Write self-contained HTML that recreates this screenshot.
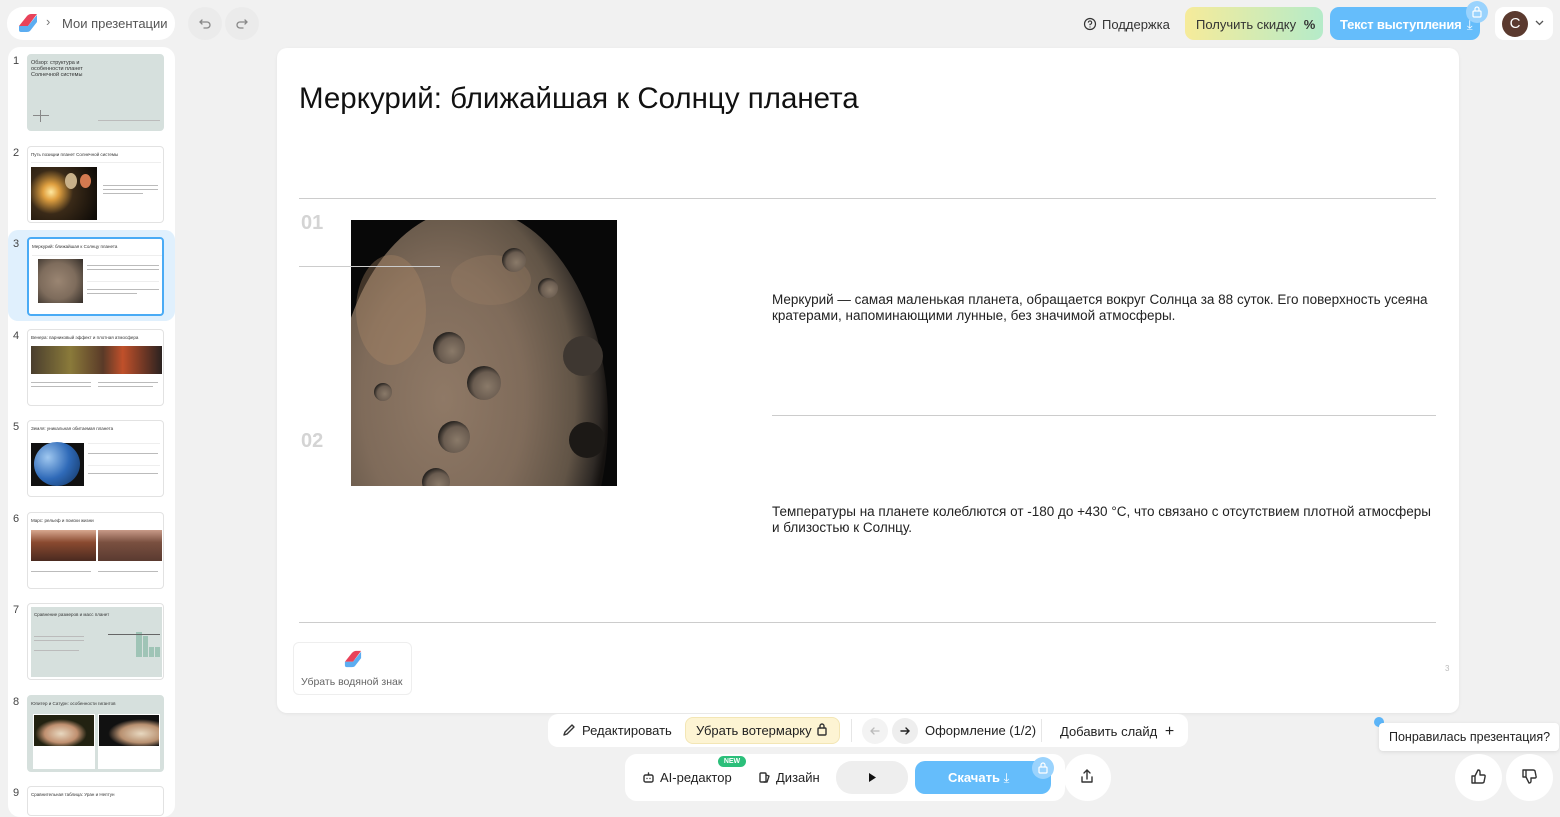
<!DOCTYPE html>
<html><head><meta charset="utf-8">
<style>
*{box-sizing:border-box;margin:0;padding:0}
body{width:1560px;height:808px;background:#f1f1f1;font-family:"Liberation Sans","DejaVu Sans",sans-serif;position:relative;overflow:hidden;color:#222}
.a{position:absolute}
.pill{background:#fff;border-radius:14px}
.th{position:absolute;left:27px;width:137px;height:77px;border:1px solid #e2e2e2;border-radius:4px;background:#fff;overflow:hidden}
.num{position:absolute;left:13px;font-size:11px;color:#444}
.tt{position:absolute;left:3px;top:5px;font-size:4.5px;color:#333;white-space:nowrap}
.ln{position:absolute;height:1px;background:#eee}
.tx{position:absolute;height:1.5px;background:#bbb}
.icn{stroke:#333;fill:none;stroke-width:1.4;stroke-linecap:round;stroke-linejoin:round}
</style></head><body>

<!-- top-left -->
<div class="a pill" style="left:7px;top:7px;width:168px;height:33px;border-radius:16px"></div>
<svg class="a" style="left:17px;top:13px" width="22" height="20" viewBox="0 0 22 20"><path d="M2 13 L10 3 Q12 1 14 1 L20 1 L11 13 Z" fill="#e8425a"/><path d="M2 13 L11 13 L20 2 L20 9 L13 18 Q12 19 10 19 L4 19 Q2 19 2 17 Z" fill="#4aa4ef" opacity=".9"/></svg>
<div class="a" style="left:46px;top:14px;font-size:13px;color:#777">›</div>
<div class="a" style="left:62px;top:16px;font-size:13px;color:#555">Мои презентации</div>
<div class="a" style="left:188px;top:7px;width:34px;height:33px;border-radius:50%;background:#ebebeb"></div>
<div class="a" style="left:225px;top:7px;width:34px;height:33px;border-radius:50%;background:#ebebeb"></div>
<svg class="a" style="left:197px;top:16px" width="16" height="16" viewBox="0 0 16 16"><path d="M5 4 L3 6 L5 8 M3 6 H10 A3 3 0 0 1 10 12 H7" fill="none" stroke="#888" stroke-width="1.3" stroke-linecap="round"/></svg>
<svg class="a" style="left:234px;top:16px" width="16" height="16" viewBox="0 0 16 16"><path d="M11 4 L13 6 L11 8 M13 6 H6 A3 3 0 0 0 6 12 H9" fill="none" stroke="#888" stroke-width="1.3" stroke-linecap="round"/></svg>

<!-- top-right -->
<svg class="a" style="left:1083px;top:17px" width="14" height="14" viewBox="0 0 14 14"><circle cx="7" cy="7" r="5.5" fill="none" stroke="#333" stroke-width="1.2"/><path d="M5.3 5.6 A1.7 1.7 0 1 1 7 7.3 V8.2" fill="none" stroke="#333" stroke-width="1.1"/><circle cx="7" cy="10" r=".6" fill="#333"/></svg>
<div class="a" style="left:1102px;top:17px;font-size:13px;color:#333">Поддержка</div>
<div class="a" style="left:1185px;top:7px;width:138px;height:33px;border-radius:9px;background:linear-gradient(90deg,#f6eb9a,#b5ebc9)"></div>
<div class="a" style="left:1196px;top:17px;font-size:13px;color:#333">Получить скидку <b style="margin-left:4px">%</b></div>
<div class="a" style="left:1330px;top:7px;width:150px;height:33px;border-radius:9px;background:#65bdfb"></div>
<div class="a" style="left:1340px;top:17px;font-size:13px;color:#fff;font-weight:bold;letter-spacing:-0.2px">Текст выступления <span style="font-weight:normal;margin-left:2px">⤓</span></div>
<div class="a" style="left:1466px;top:1px;width:22px;height:22px;border-radius:50%;background:#9ad3fd"></div>
<svg class="a" style="left:1471px;top:5px" width="12" height="13" viewBox="0 0 12 13"><rect x="2" y="6" width="8" height="6" rx="1" fill="none" stroke="#fff" stroke-width="1.2"/><path d="M4 6 V4 A2 2 0 0 1 8 4 V6" fill="none" stroke="#fff" stroke-width="1.2"/></svg>
<div class="a" style="left:1495px;top:7px;width:58px;height:33px;border-radius:9px;background:#fff"></div>
<div class="a" style="left:1502px;top:11px;width:26px;height:26px;border-radius:50%;background:#5b3a2f;color:#fff;font-size:15px;text-align:center;line-height:26px">C</div>
<svg class="a" style="left:1535px;top:20px" width="9" height="6" viewBox="0 0 9 6"><path d="M1 1 L4.5 4.5 L8 1" fill="none" stroke="#555" stroke-width="1.3"/></svg>

<!-- left panel -->
<div class="a" style="left:8px;top:47px;width:167px;height:770px;background:#fff;border-radius:12px"></div>
<div class="a" style="left:8px;top:230px;width:167px;height:91px;background:#e0f0fd;border-radius:10px"></div>

<div class="num" style="top:55px">1</div>
<div class="th" style="top:54px;background:#d6e0dd;border-color:#d6e0dd"><div class="tt" style="font-size:5.5px;line-height:6px;white-space:normal;width:70px">Обзор: структура и особенности планет Солнечной системы</div><div class="tx" style="left:70px;top:65px;width:62px;height:1px"></div><div class="a" style="left:5px;top:60px;width:16px;height:1px;background:#888"></div><div class="a" style="left:12px;top:55px;width:1px;height:12px;background:#888"></div></div>

<div class="num" style="top:147px">2</div>
<div class="th" style="top:146px"><div class="tt">Путь позиции планет Солнечной системы</div><div class="ln" style="left:3px;top:15px;width:130px"></div><div class="a" style="left:3px;top:20px;width:66px;height:53px;background:radial-gradient(circle at 20px 25px,#ffe9a0 0,#e0a040 8px,#3a2a18 22px,#100c08 50px)"></div><div class="a" style="left:37px;top:26px;width:12px;height:16px;border-radius:50%;background:#c9b18a"></div><div class="a" style="left:52px;top:27px;width:11px;height:14px;border-radius:50%;background:#d47a50"></div><div class="tx" style="left:75px;top:38px;width:55px;height:1px"></div><div class="tx" style="left:75px;top:42px;width:55px;height:1px"></div><div class="tx" style="left:75px;top:46px;width:40px;height:1px"></div></div>

<div class="num" style="top:238px">3</div>
<div class="th" style="top:237px;border:2px solid #4aabf5;height:79px"><div class="tt">Меркурий: ближайшая к Солнцу планета</div><div class="ln" style="left:3px;top:16px;width:130px"></div><div class="a" style="left:9px;top:20px;width:45px;height:44px;background:radial-gradient(circle at 20px 22px,#9a8572 0,#7e6c5c 18px,#3a332d 32px,#111 40px)"></div><div class="tx" style="left:58px;top:26px;width:72px;height:1px"></div><div class="tx" style="left:58px;top:30px;width:72px;height:1px"></div><div class="ln" style="left:58px;top:42px;width:72px"></div><div class="tx" style="left:58px;top:50px;width:72px;height:1px"></div><div class="tx" style="left:58px;top:54px;width:50px;height:1px"></div></div>

<div class="num" style="top:330px">4</div>
<div class="th" style="top:329px"><div class="tt">Венера: парниковый эффект и плотная атмосфера</div><div class="a" style="left:3px;top:16px;width:131px;height:28px;background:linear-gradient(90deg,#4a3e2e,#8a7a3a 30%,#5a3a28 55%,#c0502a 70%,#2a2220)"></div><div class="tx" style="left:3px;top:52px;width:60px;height:1px"></div><div class="tx" style="left:3px;top:56px;width:60px;height:1px"></div><div class="tx" style="left:70px;top:52px;width:60px;height:1px"></div><div class="tx" style="left:70px;top:56px;width:55px;height:1px"></div></div>

<div class="num" style="top:421px">5</div>
<div class="th" style="top:420px"><div class="tt">Земля: уникальная обитаемая планета</div><div class="a" style="left:3px;top:22px;width:53px;height:43px;background:#111"></div><div class="a" style="left:6px;top:21px;width:46px;height:44px;border-radius:50%;background:radial-gradient(circle at 30% 35%,#a0c8f0,#2f6ab8 50%,#10305a)"></div><div class="ln" style="left:60px;top:22px;width:72px"></div><div class="tx" style="left:60px;top:32px;width:70px;height:1px"></div><div class="ln" style="left:60px;top:44px;width:72px"></div><div class="tx" style="left:60px;top:52px;width:70px;height:1px"></div></div>

<div class="num" style="top:513px">6</div>
<div class="th" style="top:512px"><div class="tt">Марс: рельеф и поиски жизни</div><div class="a" style="left:3px;top:17px;width:65px;height:31px;background:linear-gradient(#d8a890,#8a4a30 40%,#4a2a20)"></div><div class="a" style="left:70px;top:17px;width:64px;height:31px;background:linear-gradient(#c89a88,#7a5040 40%,#5a3a30)"></div><div class="tx" style="left:3px;top:58px;width:60px;height:1px"></div><div class="tx" style="left:70px;top:58px;width:60px;height:1px"></div></div>

<div class="num" style="top:604px">7</div>
<div class="th" style="top:603px"><div class="a" style="left:3px;top:3px;width:131px;height:70px;background:#d6e0dd"></div><div class="tt" style="top:8px;left:6px">Сравнение размеров и масс планет</div><div class="tx" style="left:6px;top:32px;width:50px;height:1px"></div><div class="tx" style="left:6px;top:36px;width:50px;height:1px"></div><div class="tx" style="left:6px;top:46px;width:45px;height:1px"></div><div class="a" style="left:108px;top:28px;width:6px;height:25px;background:#9fc4b6"></div><div class="a" style="left:115px;top:32px;width:5px;height:21px;background:#9fc4b6"></div><div class="a" style="left:121px;top:43px;width:5px;height:10px;background:#9fc4b6"></div><div class="a" style="left:127px;top:43px;width:5px;height:10px;background:#9fc4b6"></div><div class="a" style="left:80px;top:30px;width:52px;height:1px;background:#666"></div></div>

<div class="num" style="top:696px">8</div>
<div class="th" style="top:695px;background:#d6e0dd;border-color:#d6e0dd"><div class="tt">Юпитер и Сатурн: особенности гигантов</div><div class="a" style="left:5px;top:18px;width:62px;height:55px;background:#fff"></div><div class="a" style="left:70px;top:18px;width:62px;height:55px;background:#fff"></div><div class="a" style="left:6px;top:19px;width:60px;height:31px;background:radial-gradient(ellipse at 45% 60%,#e8d8c0 0,#c09070 35%,#221 55%)"></div><div class="a" style="left:71px;top:19px;width:60px;height:31px;background:radial-gradient(ellipse at 70% 60%,#e8d8c0 0,#b89070 35%,#111 55%)"></div></div>

<div class="num" style="top:787px">9</div>
<div class="th" style="top:786px;height:30px"><div class="tt">Сравнительная таблица: Уран и Нептун</div></div>

<!-- slide -->
<div class="a" style="left:277px;top:48px;width:1182px;height:665px;background:#fff;border-radius:10px;box-shadow:0 1px 3px rgba(0,0,0,.06)"></div>
<div class="a" style="left:299px;top:82px;font-size:29.5px;color:#111">Меркурий: ближайшая к Солнцу планета</div>
<div class="a" style="left:299px;top:198px;width:1137px;height:1px;background:#ccc"></div>
<div class="a" style="left:301px;top:212px;font-size:20px;font-weight:bold;color:#d4d4d4">01</div>
<div class="a" style="left:301px;top:430px;font-size:20px;font-weight:bold;color:#d4d4d4">02</div>
<svg class="a" style="left:351px;top:220px" width="266" height="266" viewBox="0 0 266 266">
<defs>
<radialGradient id="pg" cx="0.4" cy="0.45" r="0.6"><stop offset="0" stop-color="#8f7966"/><stop offset=".5" stop-color="#7f6b5a"/><stop offset=".8" stop-color="#615446"/><stop offset=".95" stop-color="#2e2925"/><stop offset="1" stop-color="#151210"/></radialGradient>
<radialGradient id="cr" cx=".6" cy=".6" r=".6"><stop offset="0" stop-color="#8a7a69"/><stop offset=".7" stop-color="#6a5c50"/><stop offset="1" stop-color="#2a2622"/></radialGradient>
</defs>
<rect width="266" height="266" fill="#080808"/>
<ellipse cx="120" cy="200" rx="137" ry="212" fill="url(#pg)"/>
<ellipse cx="40" cy="90" rx="35" ry="55" fill="#b08a66" opacity=".35"/>
<ellipse cx="140" cy="60" rx="40" ry="25" fill="#a08066" opacity=".3"/>
<circle cx="98" cy="128" r="16" fill="url(#cr)"/>
<circle cx="133" cy="163" r="17" fill="url(#cr)"/>
<circle cx="103" cy="217" r="16" fill="url(#cr)"/>
<circle cx="163" cy="40" r="12" fill="url(#cr)"/>
<circle cx="197" cy="68" r="10" fill="url(#cr)"/>
<circle cx="32" cy="172" r="9" fill="url(#cr)"/>
<circle cx="232" cy="136" r="20" fill="#3e3731"/>
<circle cx="236" cy="220" r="18" fill="#1c1916"/>
<circle cx="85" cy="262" r="14" fill="url(#cr)"/>
</svg>
<div class="a" style="left:299px;top:266px;width:141px;height:1px;background:#ccc"></div>
<div class="a" style="left:772px;top:292px;width:670px;font-size:13.5px;line-height:16px;color:#222">Меркурий — самая маленькая планета, обращается вокруг Солнца за 88 суток. Его поверхность усеяна кратерами, напоминающими лунные, без значимой атмосферы.</div>
<div class="a" style="left:772px;top:415px;width:664px;height:1px;background:#ccc"></div>
<div class="a" style="left:772px;top:504px;width:670px;font-size:13.5px;line-height:16px;color:#222">Температуры на планете колеблются от -180 до +430 °C, что связано с отсутствием плотной атмосферы и близостью к Солнцу.</div>
<div class="a" style="left:299px;top:622px;width:1137px;height:1px;background:#ccc"></div>
<div class="a" style="left:293px;top:642px;width:119px;height:53px;border:1px solid #eee;border-radius:6px;background:#fff"></div>
<svg class="a" style="left:343px;top:650px" width="20" height="18" viewBox="0 0 22 20"><path d="M2 13 L10 3 Q12 1 14 1 L20 1 L11 13 Z" fill="#e8425a"/><path d="M2 13 L11 13 L20 2 L20 9 L13 18 Q12 19 10 19 L4 19 Q2 19 2 17 Z" fill="#4aa4ef" opacity=".9"/></svg>
<div class="a" style="left:301px;top:676px;font-size:10.5px;color:#666">Убрать водяной знак</div>
<div class="a" style="left:1445px;top:664px;font-size:8px;color:#bbb">3</div>

<!-- bottom toolbar 1 -->
<div class="a" style="left:548px;top:714px;width:640px;height:33px;background:#fff;border-radius:10px"></div>
<svg class="a" style="left:562px;top:723px" width="14" height="14" viewBox="0 0 14 14"><path class="icn" d="M2 12 L3 9 L10 2 L12 4 L5 11 Z"/></svg>
<div class="a" style="left:582px;top:723px;font-size:13px;color:#222">Редактировать</div>
<div class="a" style="left:685px;top:717px;width:155px;height:27px;border-radius:8px;background:#fdf4d3;border:1px solid #f3e6b5"></div>
<div class="a" style="left:696px;top:723px;font-size:13px;color:#222">Убрать вотермарку</div>
<svg class="a" style="left:816px;top:722px" width="12" height="14" viewBox="0 0 12 14"><rect class="icn" x="2" y="6" width="8" height="7" rx="1"/><path class="icn" d="M4 6 V4 A2 2 0 0 1 8 4 V6"/></svg>
<div class="a" style="left:851px;top:719px;width:1px;height:23px;background:#e6e6e6"></div>
<div class="a" style="left:862px;top:718px;width:26px;height:26px;border-radius:50%;background:#f3f3f3"></div>
<div class="a" style="left:892px;top:718px;width:26px;height:26px;border-radius:50%;background:#eee"></div>
<svg class="a" style="left:869px;top:725px" width="12" height="12" viewBox="0 0 12 12"><path d="M10 6 H2 M5 3 L2 6 L5 9" fill="none" stroke="#bbb" stroke-width="1.3" stroke-linecap="round"/></svg>
<svg class="a" style="left:899px;top:725px" width="12" height="12" viewBox="0 0 12 12"><path d="M2 6 H10 M7 3 L10 6 L7 9" fill="none" stroke="#222" stroke-width="1.4" stroke-linecap="round"/></svg>
<div class="a" style="left:925px;top:723px;font-size:13px;color:#222">Оформление (1/2)</div>
<div class="a" style="left:1041px;top:719px;width:1px;height:23px;background:#e6e6e6"></div>
<div class="a" style="left:1060px;top:723px;font-size:13px;color:#222">Добавить слайд <span style="font-size:16px;margin-left:4px">+</span></div>

<!-- bottom toolbar 2 -->
<div class="a" style="left:625px;top:754px;width:440px;height:47px;background:#fff;border-radius:12px"></div>
<div class="a" style="left:718px;top:756px;width:28px;height:11px;border-radius:6px;background:#2bbf7a;color:#fff;font-size:7px;font-weight:bold;text-align:center;line-height:11px">NEW</div>
<svg class="a" style="left:642px;top:771px" width="13" height="13" viewBox="0 0 13 13"><rect class="icn" x="2" y="4" width="9" height="7" rx="1.5"/><path class="icn" d="M6.5 4 V2"/><circle cx="5" cy="7.5" r=".7" fill="#333"/><circle cx="8" cy="7.5" r=".7" fill="#333"/></svg>
<div class="a" style="left:660px;top:770px;font-size:13px;color:#222">AI-редактор</div>
<svg class="a" style="left:758px;top:771px" width="13" height="13" viewBox="0 0 13 13"><rect class="icn" x="2" y="2" width="6" height="9" rx="1"/><path class="icn" d="M8 4 L11 5 L9 11 L6 11"/></svg>
<div class="a" style="left:776px;top:770px;font-size:13px;color:#222">Дизайн</div>
<div class="a" style="left:836px;top:761px;width:72px;height:33px;border-radius:16px;background:#eee"></div>
<svg class="a" style="left:867px;top:772px" width="10" height="11" viewBox="0 0 10 11"><path d="M2 1 L9 5.5 L2 10 Z" fill="#111"/></svg>
<div class="a" style="left:915px;top:761px;width:136px;height:33px;border-radius:10px;background:#65bdfb"></div>
<div class="a" style="left:948px;top:770px;font-size:13px;color:#fff;font-weight:bold">Скачать <span style="font-weight:normal">⤓</span></div>
<div class="a" style="left:1032px;top:757px;width:22px;height:22px;border-radius:50%;background:#9ad3fd"></div>
<svg class="a" style="left:1037px;top:761px" width="12" height="13" viewBox="0 0 12 13"><rect x="2" y="6" width="8" height="6" rx="1" fill="none" stroke="#fff" stroke-width="1.2"/><path d="M4 6 V4 A2 2 0 0 1 8 4 V6" fill="none" stroke="#fff" stroke-width="1.2"/></svg>
<div class="a" style="left:1064px;top:754px;width:47px;height:47px;border-radius:50%;background:#fff"></div>
<svg class="a" style="left:1079px;top:768px" width="16" height="17" viewBox="0 0 16 17"><path class="icn" d="M8 11 V2 M5 5 L8 2 L11 5 M3 9 V14 H13 V9"/></svg>

<!-- feedback -->
<div class="a" style="left:1374px;top:717px;width:10px;height:10px;border-radius:50%;background:#5cb5f8"></div>
<div class="a" style="left:1379px;top:723px;width:180px;height:28px;background:#fff;border-radius:4px;box-shadow:0 1px 4px rgba(0,0,0,.1)"></div>
<div class="a" style="left:1389px;top:730px;font-size:12.5px;color:#222">Понравилась презентация?</div>
<div class="a" style="left:1455px;top:754px;width:47px;height:47px;border-radius:50%;background:#fff"></div>
<div class="a" style="left:1506px;top:754px;width:47px;height:47px;border-radius:50%;background:#fff"></div>
<svg class="a" style="left:1470px;top:768px" width="17" height="17" viewBox="0 0 17 17"><path class="icn" d="M2 8 H5 V15 H2 Z M5 8 L8 2 Q10 2 10 4 V7 H14 Q15.5 7 15 9 L14 14 Q13.5 15 12 15 H5"/></svg>
<svg class="a" style="left:1521px;top:768px" width="17" height="17" viewBox="0 0 17 17"><path class="icn" d="M2 9 H5 V2 H2 Z M5 9 L8 15 Q10 15 10 13 V10 H14 Q15.5 10 15 8 L14 3 Q13.5 2 12 2 H5"/></svg>

</body></html>
